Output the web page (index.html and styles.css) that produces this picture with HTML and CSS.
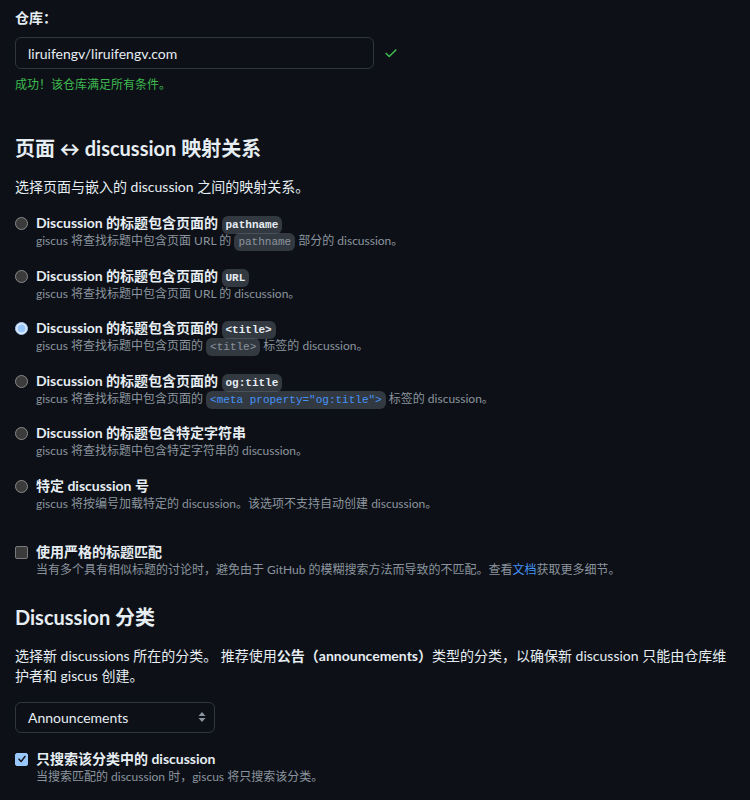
FILE: index.html
```html
<!DOCTYPE html>
<html lang="zh-CN">
<head>
<meta charset="utf-8">
<title>giscus 配置</title>
<link rel="stylesheet" href="styles.css">
</head>
<body>
<main class="page">
  <section class="repo">
    <label class="label">仓库：</label>
    <div class="repo-row">
      <div class="input">liruifengv/liruifengv.com</div>
      <svg class="ok" width="14" height="14" viewBox="0 0 16 16"><path d="M2.5 8.5 6 12l7.5-7.5" fill="none" stroke="#3fb950" stroke-width="1.8" stroke-linecap="round" stroke-linejoin="round"/></svg>
    </div>
    <p class="success">成功！该仓库满足所有条件。</p>
  </section>

  <h2 class="h2 h2-map">页面 ↔ discussion 映射关系</h2>
  <p class="lead">选择页面与嵌入的 discussion 之间的映射关系。</p>

  <div class="options">
    <div class="opt">
      <span class="radio"></span>
      <div class="opt-body">
        <div class="opt-title">Discussion 的标题包含页面的 <code class="tcode">pathname</code></div>
        <div class="opt-desc">giscus 将查找标题中包含页面 URL 的 <code class="dcode">pathname</code> 部分的 discussion。</div>
      </div>
    </div>
    <div class="opt">
      <span class="radio"></span>
      <div class="opt-body">
        <div class="opt-title">Discussion 的标题包含页面的 <code class="tcode">URL</code></div>
        <div class="opt-desc">giscus 将查找标题中包含页面 URL 的 discussion。</div>
      </div>
    </div>
    <div class="opt">
      <span class="radio checked"></span>
      <div class="opt-body">
        <div class="opt-title">Discussion 的标题包含页面的 <code class="tcode">&lt;title&gt;</code></div>
        <div class="opt-desc">giscus 将查找标题中包含页面的 <code class="dcode">&lt;title&gt;</code> 标签的 discussion。</div>
      </div>
    </div>
    <div class="opt">
      <span class="radio"></span>
      <div class="opt-body">
        <div class="opt-title">Discussion 的标题包含页面的 <code class="tcode">og:title</code></div>
        <div class="opt-desc">giscus 将查找标题中包含页面的 <code class="dcode link">&lt;meta property="og:title"&gt;</code> 标签的 discussion。</div>
      </div>
    </div>
    <div class="opt">
      <span class="radio"></span>
      <div class="opt-body">
        <div class="opt-title">Discussion 的标题包含特定字符串</div>
        <div class="opt-desc">giscus 将查找标题中包含特定字符串的 discussion。</div>
      </div>
    </div>
    <div class="opt">
      <span class="radio"></span>
      <div class="opt-body">
        <div class="opt-title">特定 discussion 号</div>
        <div class="opt-desc">giscus 将按编号加载特定的 discussion。该选项不支持自动创建 discussion。</div>
      </div>
    </div>
  </div>

  <div class="opt opt-check">
    <span class="checkbox"></span>
    <div class="opt-body">
      <div class="opt-title">使用严格的标题匹配</div>
      <div class="opt-desc">当有多个具有相似标题的讨论时，避免由于 GitHub 的模糊搜索方法而导致的不匹配。查看<a class="link-text" href="#">文档</a>获取更多细节。</div>
    </div>
  </div>

  <h2 class="h2 h2-cat">Discussion 分类</h2>
  <p class="lead lead-cat">选择新 discussions 所在的分类。 推荐使用<strong>公告（announcements）</strong>类型的分类，以确保新 discussion 只能由仓库维护者和 giscus 创建。</p>

  <div class="select">
    <span>Announcements</span>
    <svg class="arrows" width="8" height="12" viewBox="0 0 8 12"><path d="M4 1 7.5 5h-7z M4 11 .5 7h7z" fill="#8b949e"/></svg>
  </div>

  <div class="opt opt-check2">
    <span class="checkbox checked">
      <svg width="10" height="10" viewBox="0 0 10 10"><path d="M2 5.2 4.1 7.5 8 2.5" fill="none" stroke="#1b1f24" stroke-width="1.6" stroke-linecap="round" stroke-linejoin="round"/></svg>
    </span>
    <div class="opt-body">
      <div class="opt-title">只搜索该分类中的 discussion</div>
      <div class="opt-desc">当搜索匹配的 discussion 时，giscus 将只搜索该分类。</div>
    </div>
  </div>
</main>
</body>
</html>
```

FILE: styles.css
```css
html, body {
  margin: 0;
  padding: 0;
  background: #0d1117;
}
body {
  font-family: Lato, "Noto Sans CJK SC", sans-serif;
  color: #e6edf3;
  font-size: 14px;
}
.page {
  padding: 8px 15px 0 15px;
  width: 720px;
}
.label {
  display: block;
  font-weight: 700;
  font-size: 14px;
  line-height: 20px;
}
.repo-row {
  margin-top: 9px;
  display: flex;
  align-items: center;
  gap: 10px;
}
.input {
  box-sizing: border-box;
  width: 359px;
  height: 32px;
  border: 1px solid #30363d;
  border-radius: 6px;
  padding: 0 12px;
  display: flex;
  align-items: center;
  font-size: 14px;
  color: #e6edf3;
  background: #0d1117;
}
.ok { display: block; }
.success {
  margin: 7px 0 0 0;
  font-size: 12px;
  line-height: 18px;
  color: #3fb950;
}
.h2 {
  margin: 0;
  font-size: 20px;
  line-height: 30px;
  font-weight: 700;
  color: #e6edf3;
}
.h2-map { margin-top: 39px; }
.lead {
  margin: 14px 0 0 0;
  font-size: 14px;
  line-height: 20px;
  color: #e6edf3;
}
.options {
  margin-top: 17px;
  display: flex;
  flex-direction: column;
  gap: 16.5px;
}
.opt {
  display: flex;
  align-items: flex-start;
  gap: 8px;
}
.opt-title {
  font-size: 14px;
  line-height: 18px;
  height: 18px;
  font-weight: 700;
  color: #e6edf3;
}
.opt-desc {
  font-size: 12px;
  line-height: 18px;
  color: #8b949e;
}
.radio {
  box-sizing: border-box;
  flex: none;
  width: 13px;
  height: 13px;
  margin-top: 3px;
  border-radius: 50%;
  border: 1px solid #8a8a8a;
  background: #3b3b3b;
}
.radio.checked {
  border: 1px solid #a9c9f5;
  background: #99c8ff;
  box-shadow: inset 0 0 0 1.5px #e9eef6;
}
.checkbox {
  box-sizing: border-box;
  flex: none;
  width: 13px;
  height: 13px;
  margin-top: 3px;
  border-radius: 2px;
  border: 1px solid #7a7a7a;
  background: #3b3b3b;
  display: flex;
  align-items: center;
  justify-content: center;
}
.checkbox.checked {
  border-color: #99c8ff;
  background: #99c8ff;
}
.tcode, .dcode {
  font-family: "Liberation Mono", "DejaVu Sans Mono", monospace;
  font-size: 11px;
  line-height: 1;
  padding: 3px 4px;
  border-radius: 6px;
  background: rgba(110, 118, 129, 0.4);
}
.tcode {
  font-weight: 700;
  color: #e6edf3;
}
.dcode {
  color: #8b949e;
}
.dcode.link { color: #4493f8; }
.link-text {
  color: #4493f8;
  text-decoration: none;
}
.opt-check {
  margin-top: 30px;
}
.h2-cat { margin-top: 23px; }
.lead-cat { margin-top: 14px; }
.lead-cat strong { font-weight: 700; }
.select {
  box-sizing: border-box;
  margin-top: 16px;
  width: 200px;
  height: 31px;
  border: 1px solid #30363d;
  border-radius: 6px;
  padding: 0 8px 0 12px;
  display: flex;
  align-items: center;
  justify-content: space-between;
  font-size: 14px;
  color: #e6edf3;
}
.opt-check2 { margin-top: 17px; }
```
